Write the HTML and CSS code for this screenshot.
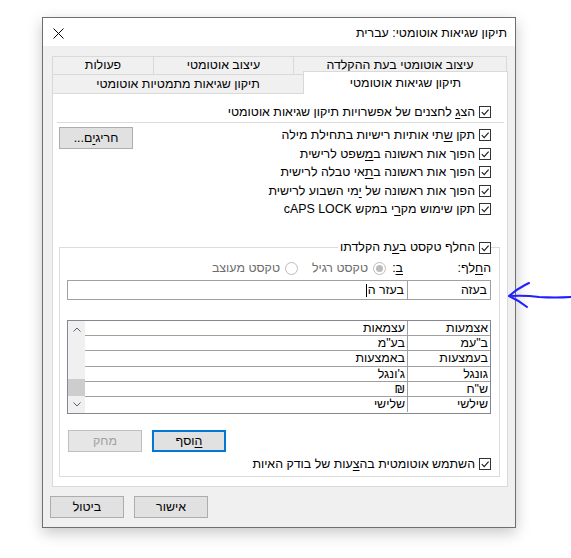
FILE: index.html
```html
<!DOCTYPE html>
<html lang="he">
<head>
<meta charset="utf-8">
<link rel="stylesheet" href="styles.css">
</head>
<body>
<div class="dialog" dir="rtl">
  <div class="titlebar">
    <span class="title">תיקון שגיאות אוטומטי: עברית</span>
    <svg class="close" width="11" height="11" viewBox="0 0 11 11"><path d="M0.5 0.5 L10.5 10.5 M10.5 0.5 L0.5 10.5" stroke="#000" stroke-width="1" fill="none"/></svg>
  </div>
  <div class="body">
    <div class="tabs">
      <div class="tabrow row1">
        <div class="tab t-typing">עיצוב אוטומטי בעת ההקלדה</div>
        <div class="tab t-format">עיצוב אוטומטי</div>
        <div class="tab t-actions">פעולות</div>
      </div>
      <div class="tabrow row2">
        <div class="tab active t-auto">תיקון שגיאות אוטומטי</div>
        <div class="tab t-math">תיקון שגיאות מתמטיות אוטומטי</div>
      </div>
    </div>
    <div class="panel">
      <div class="cbrow first"><span class="cb"><svg viewBox="0 0 10 10"><path d="M1.8 5.2 L4.2 7.6 L8.6 2.6" /></svg></span><span>הצ<u>ג</u> לחצנים של אפשרויות תיקון שגיאות אוטומטי</span></div>
      <div class="sep"></div>
      <div class="section">
        <div class="rows">
          <div class="cbrow"><span class="cb"><svg viewBox="0 0 10 10"><path d="M1.8 5.2 L4.2 7.6 L8.6 2.6" /></svg></span><span>תקן <u>ש</u>תי אותיות רישיות בתחילת מילה</span></div>
          <div class="cbrow"><span class="cb"><svg viewBox="0 0 10 10"><path d="M1.8 5.2 L4.2 7.6 L8.6 2.6" /></svg></span><span>הפוך אות ראשונה ב<u>מ</u>שפט לרישית</span></div>
          <div class="cbrow"><span class="cb"><svg viewBox="0 0 10 10"><path d="M1.8 5.2 L4.2 7.6 L8.6 2.6" /></svg></span><span>הפוך אות ראשונה ב<u>ת</u>אי טבלה לרישית</span></div>
          <div class="cbrow"><span class="cb"><svg viewBox="0 0 10 10"><path d="M1.8 5.2 L4.2 7.6 L8.6 2.6" /></svg></span><span>הפוך אות ראשונה של <u>י</u>מי השבוע לרישית</span></div>
          <div class="cbrow"><span class="cb"><svg viewBox="0 0 10 10"><path d="M1.8 5.2 L4.2 7.6 L8.6 2.6" /></svg></span><span>תקן שימוש מק<u>ר</u>י במקש cAPS LOCK</span></div>
        </div>
        <button class="btn exc">חריג<u>י</u>ם...</button>
      </div>
      <fieldset class="group">
        <legend class="legend"><span class="cb"><svg viewBox="0 0 10 10"><path d="M1.8 5.2 L4.2 7.6 L8.6 2.6" /></svg></span><span>החלף טקסט ב<u>ע</u>ת הקלדתו</span></legend>
        <div class="labels">
          <span class="lbl-replace">ה<u>ח</u>לף:</span>
          <span class="lbl-with"><u>ב</u>:</span>
          <span class="opt opt1"><span class="radio on"><span class="dot"></span></span><span>טקסט רגיל</span></span>
          <span class="opt"><span class="radio"></span><span>טקסט מעוצב</span></span>
        </div>
        <div class="inputs">
          <div class="field f-replace">בעזה</div>
          <div class="field f-with">בעזר ה<span class="caret"></span></div>
        </div>
        <div class="list">
          <div class="table">
            <div class="trow"><div class="c1">אצמעות</div><div class="c2">עצמאות</div></div>
            <div class="trow"><div class="c1">ב"עמ</div><div class="c2">בע"מ</div></div>
            <div class="trow"><div class="c1">בעמצעות</div><div class="c2">באמצעות</div></div>
            <div class="trow"><div class="c1">גונגל</div><div class="c2">ג'ונגל</div></div>
            <div class="trow"><div class="c1">ש"ח</div><div class="c2">₪</div></div>
            <div class="trow last"><div class="c1">שילשי</div><div class="c2">שלישי</div></div>
          </div>
          <div class="scrollbar">
            <div class="sb-btn"><svg width="8" height="5" viewBox="0 0 8 5"><path d="M0.5 4.5 L4 1 L7.5 4.5" /></svg></div>
            <div class="sb-track"></div>
            <div class="sb-thumb"></div>
            <div class="sb-btn"><svg width="8" height="5" viewBox="0 0 8 5"><path d="M0.5 0.5 L4 4 L7.5 0.5" /></svg></div>
          </div>
        </div>
        <div class="actions">
          <button class="btn default"><u>ה</u>וסף</button>
          <button class="btn disabled">מחק</button>
        </div>
        <div class="cbrow bottom"><span class="cb"><svg viewBox="0 0 10 10"><path d="M1.8 5.2 L4.2 7.6 L8.6 2.6" /></svg></span><span>השתמש אוטומטית בה<u>צ</u>עות של בודק האיות</span></div>
      </fieldset>
    </div>
    <div class="footer">
      <button class="btn">אישור</button>
      <button class="btn">ביטול</button>
    </div>
  </div>
</div>
<svg class="arrow" width="66" height="34" viewBox="0 0 66 34"><path d="M24 5 Q22 6 20 7 Q12 11 4 18 Q13 22 22 29 M4 18 Q20 17 34 19 Q50 20 66 19" /></svg>
</body>
</html>
```
FILE: styles.css
```css
* { box-sizing: border-box; }
html, body { margin: 0; padding: 0; background: #fff; }
body {
  font-family: "Liberation Sans", Arial, sans-serif;
  font-size: 12.4px;
  color: #000;
  width: 571px;
  height: 558px;
  overflow: hidden;
}
u { text-decoration: underline; text-underline-offset: 2px; }

.dialog {
  margin: 17px 0 0 42px;
  width: 474px;
  height: 511px;
  border: 1px solid #6f6f6f;
  background: #f0f0f0;
  box-shadow: 0 5px 14px rgba(0,0,0,0.22);
  display: flex;
  flex-direction: column;
}

.titlebar {
  height: 28px;
  background: #fff;
  display: flex;
  align-items: center;
  justify-content: space-between;
  padding: 0 8px 0 10px;
}
.title { padding-top: 1px; }
.close { display: block; margin-top: 2px; }

.body { padding: 10px 7px 0 9px; }

.tabs { height: 37px; }
.tabrow { display: flex; }
.row1 { height: 18px; padding-right: 1px; }
.row2 { height: 19px; align-items: flex-end; }
.tab {
  border: 1px solid #d9d9d9;
  border-bottom: none;
  background: #f0f0f0;
  text-align: center;
  line-height: 17px;
  height: 100%;
  white-space: nowrap;
}
.row1 .tab + .tab { border-right: none; }
.t-typing { width: 214px; }
.t-format { width: 140px; }
.t-actions { width: 101px; }
.t-auto { width: 205px; }
.t-math { width: 251px; border-right: none; }
.row2 .tab { height: 19px; line-height: 18px; }
.row2 .tab.active {
  background: #fff;
  height: 23px;
  line-height: 22px;
  margin-bottom: -1px;
  position: relative;
  z-index: 2;
}

.panel {
  height: 394px;
  border: 1px solid #d9d9d9;
  background: #fff;
  position: relative;
  z-index: 1;
}

.cb {
  width: 12px;
  height: 12px;
  border: 1px solid #333;
  background: #fff;
  flex: none;
  display: block;
}
.cb svg { display: block; width: 10px; height: 10px; }
.cb svg path { fill: none; stroke: #1a1a1a; stroke-width: 1.1; }

.cbrow {
  display: flex;
  align-items: center;
  gap: 4px;
  height: 18.5px;
  white-space: nowrap;
}
.cbrow.first { height: 19px; margin-top: 8px; padding-right: 16px; }

.sep { height: 1px; background: #dcdcdc; margin: 1px 3px 0 4px; }

.section {
  display: flex;
  justify-content: space-between;
  margin-top: 3px;
  padding-right: 16px;
}
.rows { display: flex; flex-direction: column; }

.btn {
  font-family: "Liberation Sans", Arial, sans-serif;
  font-size: 12.4px;
  color: #000;
  width: 74px;
  height: 22px;
  border: 1px solid #adadad;
  background: #e1e1e1;
  padding: 0;
  margin: 0;
  line-height: 18px;
}
.btn.exc { margin: 1px 0 0 6px; }
.btn.default { border: 2px solid #0078d7; }
.btn.disabled { color: #a0a0a0; border-color: #bfbfbf; background: #e6e6e6; }

.group {
  margin: 22.5px 7px 0 6px;
  border: 1px solid #dcdcdc;
  padding: 7px 8px 5px 7px;
  min-width: 0;
}
.legend {
  display: flex;
  align-items: center;
  gap: 4px;
  height: 13px;
  line-height: 13px;
  padding: 0 0 0 2px;
  margin: 0;
}

.labels {
  display: flex;
  align-items: center;
  height: 14px;
  line-height: 14px;
  white-space: nowrap;
}
.lbl-replace { width: 88px; }
.lbl-with { width: 17px; }
.opt { display: flex; align-items: center; gap: 5px; color: #6d6d6d; }
.opt1 { width: 88px; }
.radio {
  width: 13px;
  height: 13px;
  border: 1px solid #bcbcbc;
  border-radius: 50%;
  background: #fff;
  display: flex;
  align-items: center;
  justify-content: center;
}
.radio .dot { width: 7px; height: 7px; border-radius: 50%; background: #bcbcbc; }

.inputs {
  display: flex;
  margin-top: 5px;
  height: 20px;
  border: 1px solid #a0a0a0;
}
.field {
  padding: 0 3px 0 2px;
  line-height: 18px;
  white-space: nowrap;
  display: flex;
  align-items: center;
}
.f-replace { width: 83px; border-left: 1px solid #a0a0a0; }
.f-with { flex: 1; }
.caret { display: block; width: 1px; height: 13px; background: #000; margin-right: 1px; }

.list {
  display: flex;
  margin-top: 20px;
  height: 94px;
  border: 1px solid #828790;
}
.table { flex: 1; display: flex; flex-direction: column; }
.trow {
  display: flex;
  height: 15.2px;
  border-bottom: 1px solid #a0a0a0;
  line-height: 14px;
  white-space: nowrap;
}
.trow.last { border-bottom: none; }
.c1 { width: 83px; border-left: 1px solid #a0a0a0; padding-right: 2px; }
.c2 { flex: 1; padding-right: 2px; }

.scrollbar {
  width: 17px;
  background: #f0f0f0;
  display: flex;
  flex-direction: column;
}
.sb-btn { height: 17px; display: flex; align-items: center; justify-content: center; }
.sb-btn svg path { fill: none; stroke: #606060; stroke-width: 1; }
.sb-track { flex: 1; }
.sb-thumb { height: 17px; background: #cdcdcd; }

.actions {
  display: flex;
  justify-content: flex-end;
  gap: 10px;
  margin-top: 16px;
  padding-left: 1px;
}
.cbrow.bottom { height: 14px; margin-top: 5px; }

.footer {
  display: flex;
  justify-content: flex-end;
  gap: 10px;
  margin-top: 9px;
  margin-left: -2px;
}

.arrow {
  position: absolute;
  left: 505px;
  top: 278px;
}
.arrow path { fill: none; stroke: #1f1fff; stroke-width: 2; stroke-linecap: round; stroke-linejoin: round; }
```
